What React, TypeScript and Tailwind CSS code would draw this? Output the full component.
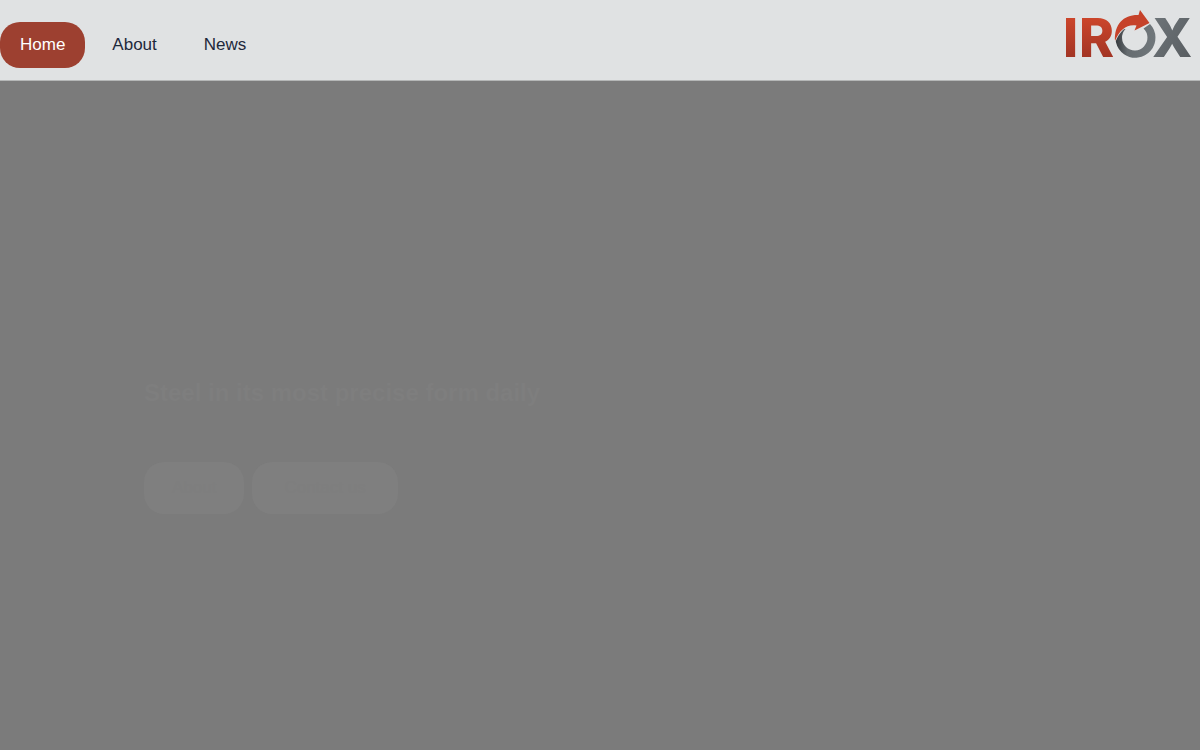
const navItems = [
  { label: "Home", href: "#home", active: true },
  { label: "About", href: "#about", active: false },
  { label: "News", href: "#news", active: false },
];

function Logo() {
  return (
    <svg viewBox="0 0 140 80" className="h-20 w-[140px]" role="img" aria-label="IROX">
      <defs>
        <linearGradient id="irox-red" x1="0" y1="0" x2="0" y2="1">
          <stop offset="0.2" stopColor="#cb452b" />
          <stop offset="0.8" stopColor="#a23424" />
        </linearGradient>
        <linearGradient id="irox-gray" x1="0" y1="0" x2="1" y2="1">
          <stop offset="0" stopColor="#70777b" />
          <stop offset="1" stopColor="#565a5e" />
        </linearGradient>
        <linearGradient id="irox-ring" x1="0" y1="0" x2="1" y2="0">
          <stop offset="0" stopColor="#34383c" />
          <stop offset="0.3" stopColor="#666c70" />
          <stop offset="1" stopColor="#70777b" />
        </linearGradient>
      </defs>
      <g fontFamily="Inter, sans-serif" fontWeight="800" fontSize="53">
        <text x="3" y="57" fill="url(#irox-red)">I</text>
        <text x="19" y="57" fill="url(#irox-red)">R</text>
        <text x="92" y="57" fill="url(#irox-gray)">X</text>
      </g>
      <path
        d="M90 24 A20 20 0 1 1 58 28 L65.500 29 A12.700 12.700 0 1 0 83.500 28.500 Z"
        fill="url(#irox-ring)"
      />
      <path
        d="M55 41 C54 24 64 14.500 78.500 15 L80 10 L89.500 23 L74.500 30.500 L76.500 25.500 C67 24 60 29 55 41 Z"
        fill="#c6422a"
        stroke="#e0e2e3"
        strokeWidth="1.500"
        paintOrder="stroke"
      />
    </svg>
  );
}

export default function App() {
  return (
    <div className="flex min-h-screen flex-col bg-[#7b7b7b] font-['Liberation_Sans',Arial,sans-serif] text-[17px] leading-[26px]">
      <header className="flex h-[81px] items-start justify-between border-b border-[#b5b7b7] bg-[#e0e2e3]">
        <nav className="flex gap-[7px] pt-[22px]">
          {navItems.map((item) => (
            <a
              key={item.label}
              href={item.href}
              aria-current={item.active ? "page" : undefined}
              className={
                item.active
                  ? "rounded-[20px] bg-[#9d4030] px-5 py-2.5 text-white"
                  : "rounded-[20px] px-5 py-2.5 text-[#1e293b]"
              }
            >
              {item.label}
            </a>
          ))}
        </nav>
        <a href="#home">
          <Logo />
        </a>
      </header>

      <main className="flex flex-1 flex-col px-36 pt-[296px]">
        <h1 className="text-2xl leading-8 font-bold text-[#7e7e7e]">Steel in its most precise form daily</h1>
        <div className="mt-[53px] flex gap-2">
          <a href="#about" className="rounded-[20px] bg-[#7f7f7f] px-7 py-[13px] text-[#7e7e7e]">
            About
          </a>
          <a href="#contact" className="rounded-[20px] bg-[#7f7f7f] px-8 py-[13px] text-[#7e7e7e]">
            Contact us
          </a>
        </div>
      </main>
    </div>
  );
}
